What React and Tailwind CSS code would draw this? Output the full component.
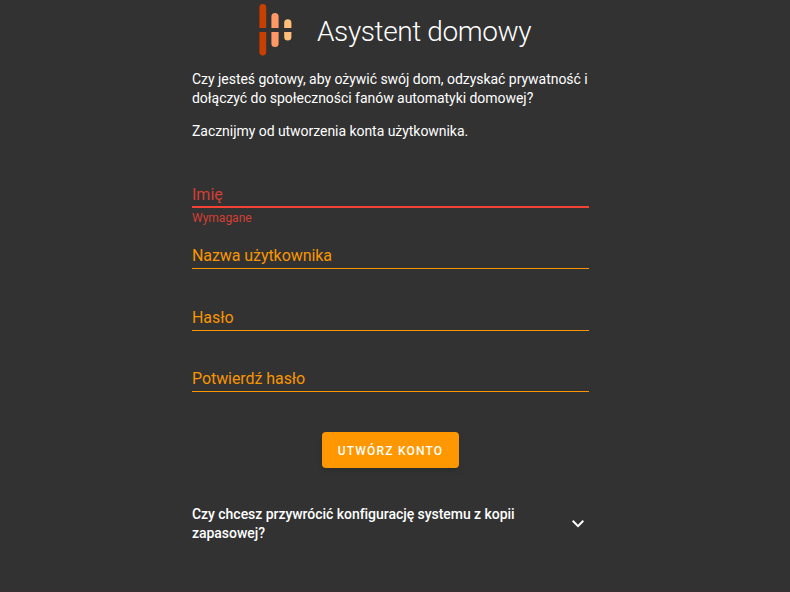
function Logo() {
  return (
    <svg width="34" height="52" viewBox="0 0 34 52" className="block shrink-0">
      <path fill="#c84000" d="M0.4 24V3.5a3.4 3.4 0 0 1 6.8 0V24zM0.4 28V48a3.4 3.4 0 0 0 6.8 0V28z" />
      <path fill="#ff9865" d="M12.4 24V12.6a3.6 3.6 0 0 1 7.2 0V24zM12.4 28V39.4a3.6 3.6 0 0 0 7.2 0V28z" />
      <path fill="#ffbf79" d="M25.2 24V18.8a3.6 3.6 0 0 1 7.2 0V24zM25.2 28V33a3.6 3.6 0 0 0 7.2 0V28z" />
    </svg>
  );
}

function Field({ label, error }) {
  return (
    <div>
      <div className={error ? "h-[24px] text-[16px] leading-[25px] text-[#d23f34]" : "h-[24px] text-[16px] leading-[24px] tracking-[-0.07px] text-[#f99500]"}>
        {label}
      </div>
      <div className={error ? "h-[2px] bg-[#f44336]" : "h-px bg-[#f99500]"} />
      {error && <p className="h-[36px] text-[12px] leading-5 text-[#d23f34]">{error}</p>}
    </div>
  );
}

export default function App() {
  return (
    <div className="flex h-[592px] w-[790px] flex-col border-b border-[#392f35] bg-[#323232] pl-[192px] font-['Roboto',sans-serif] text-white">
      <main className="w-[397px]">
        <header className="flex items-center pl-[67px] pt-1">
          <Logo />
          <h1 className="ml-[24px] whitespace-nowrap pt-[3px] text-[28px] font-light leading-[49px] tracking-[-0.4px]">
            Asystent domowy
          </h1>
        </header>
        <p className="mt-[14px] whitespace-nowrap text-[14px] leading-[19px] tracking-[-0.035px]">
          Czy jesteś gotowy, aby ożywić swój dom, odzyskać prywatność i
          <br />
          dołączyć do społeczności fanów automatyki domowej?
        </p>
        <p className="mt-[14px] text-[14px] leading-[19px] tracking-[-0.045px]">Zacznijmy od utworzenia konta użytkownika.</p>
        <form className="mt-[41px]">
          <Field label="Imię" error="Wymagane" />
          <Field label="Nazwa użytkownika" />
          <div className="h-[37px]" />
          <Field label="Hasło" />
          <div className="h-[36px]" />
          <Field label="Potwierdź hasło" />
        </form>
        <div className="mt-[40px] flex justify-center pr-[1px]">
          <button className="h-9 w-[137px] whitespace-nowrap rounded bg-[#ff9800] pl-px pt-[2px] text-[12px] font-medium tracking-[1.2px] shadow-md">
            UTWÓRZ KONTO
          </button>
        </div>
        <section className="mt-[37px] flex items-center justify-between">
          <h2 className="whitespace-nowrap text-[14px] font-medium leading-[19px] tracking-[-0.04px]">
            Czy chcesz przywrócić konfigurację systemu z kopii
            <br />
            zapasowej?
          </h2>
          <svg width="24" height="24" viewBox="0 0 24 24" fill="white" className="-mr-px">
            <path d="M7.41 8.09 12 12.67l4.59-4.58L18 9.5l-6 6-6-6z" />
          </svg>
        </section>
      </main>
    </div>
  );
}
